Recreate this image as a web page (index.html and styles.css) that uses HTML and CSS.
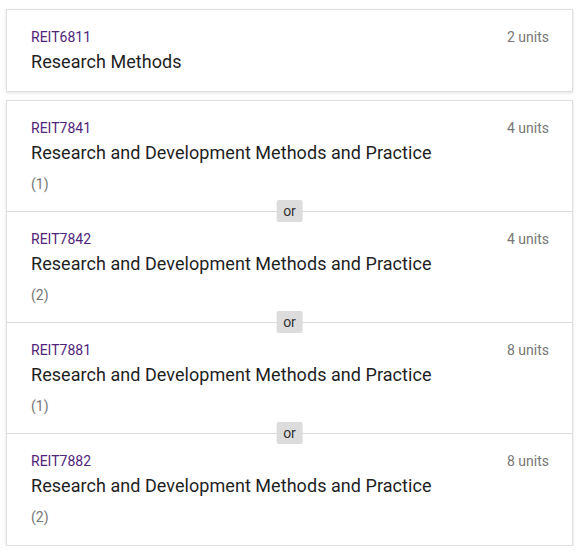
FILE: index.html
```html
<!DOCTYPE html>
<html lang="en">
<head>
<meta charset="utf-8">
<link rel="stylesheet" href="styles.css">
</head>
<body>
<div class="list">
  <div class="card">
    <div class="course single">
      <div class="head"><span class="code">REIT6811</span><span class="units">2 units</span></div>
      <div class="title">Research Methods</div>
    </div>
  </div>
  <div class="card">
    <div class="course">
      <div class="head"><span class="code">REIT7841</span><span class="units">4 units</span></div>
      <div class="title">Research and Development Methods and Practice</div>
      <div class="sub">(1)</div>
      <span class="or">or</span>
    </div>
    <div class="course">
      <div class="head"><span class="code">REIT7842</span><span class="units">4 units</span></div>
      <div class="title">Research and Development Methods and Practice</div>
      <div class="sub">(2)</div>
      <span class="or">or</span>
    </div>
    <div class="course">
      <div class="head"><span class="code">REIT7881</span><span class="units">8 units</span></div>
      <div class="title">Research and Development Methods and Practice</div>
      <div class="sub">(1)</div>
      <span class="or">or</span>
    </div>
    <div class="course">
      <div class="head"><span class="code">REIT7882</span><span class="units">8 units</span></div>
      <div class="title">Research and Development Methods and Practice</div>
      <div class="sub">(2)</div>
    </div>
  </div>
</div>
</body>
</html>
```
FILE: styles.css
```css
html, body {
  margin: 0;
  padding: 0;
  background: #ffffff;
}
body {
  font-family: Roboto, "Liberation Sans", sans-serif;
  color: #1f1f1f;
}
.list {
  padding: 9px 8px 0 6px;
  display: flex;
  flex-direction: column;
  gap: 8px;
}
.card {
  background: #fff;
  border: 1px solid #e0e0e0;
  box-shadow: 0 1px 3px rgba(0, 0, 0, 0.12);
}
.course {
  position: relative;
  padding: 17px 23px 17px 24px;
  border-top: 1px solid #dcdcdc;
}
.course:first-child {
  border-top: none;
}
.course:last-child {
  padding-bottom: 18px;
}
.course.single {
  padding: 17px 23px 15px 24px;
}
.head {
  display: flex;
  justify-content: space-between;
  align-items: center;
  height: 20px;
}
.code {
  font-size: 14px;
  color: #51247a;
}
.units {
  font-size: 14px;
  color: #777;
}
.title {
  margin-top: 1px;
  font-size: 18px;
  line-height: 28px;
  letter-spacing: 0.05px;
  color: #1f1f1f;
}
.sub {
  margin-top: 7px;
  font-size: 14px;
  line-height: 20px;
  color: #777;
}
.or {
  position: absolute;
  left: 50%;
  bottom: -11px;
  transform: translateX(-50%);
  z-index: 1;
  background: #dcdcdc;
  color: #333;
  font-size: 14px;
  line-height: 22px;
  padding: 0 7px;
  border-radius: 2px;
}
```
